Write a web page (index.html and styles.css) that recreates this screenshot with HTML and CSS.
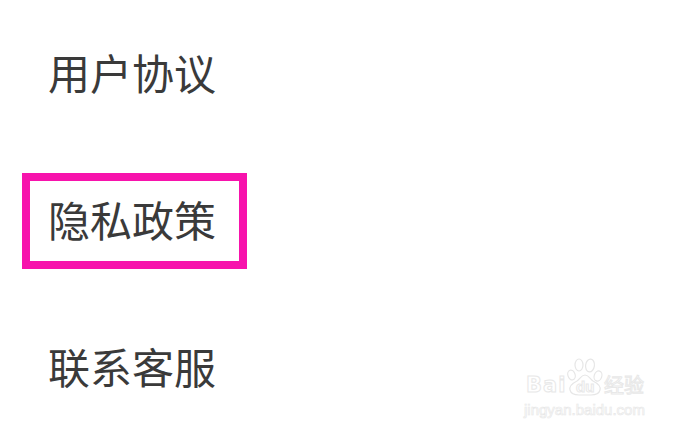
FILE: index.html
```html
<!DOCTYPE html>
<html lang="zh-CN">
<head>
    <meta charset="UTF-8">
    <meta name="viewport" content="width=device-width, initial-scale=1.0">
    <title>设置</title>
    <link rel="stylesheet" href="styles.css">
</head>
<body>
    <ul class="menu">
        <li class="menu-item">用户协议</li>
        <li class="menu-item"><span class="highlight">隐私政策</span></li>
        <li class="menu-item">联系客服</li>
    </ul>

    <div class="watermark">
        <div class="wm-logo">
            <span class="wm-bai">Bai</span>
            <svg class="wm-paw" viewBox="0 0 36 38" width="36" height="38">
                <g fill="#fff" stroke="#e6e6e6" stroke-width="1.2">
                    <ellipse cx="4.5" cy="17" rx="3.6" ry="5" transform="rotate(-18 4.5 17)"/>
                    <ellipse cx="12" cy="7" rx="4" ry="6"/>
                    <ellipse cx="23" cy="7.5" rx="4.4" ry="6.5" transform="rotate(8 23 7.5)"/>
                    <ellipse cx="31" cy="18" rx="3.8" ry="5.2" transform="rotate(18 31 18)"/>
                    <path d="M18 17c-4 0-5 4-8 6-4 2-8 5-7 9 1 4 5 5 9 5h12c4 0 8-1 9-5 1-4-3-7-7-9-3-2-4-6-8-6z"/>
                </g>
            </svg>
            <span class="wm-du">du</span>
            <span class="wm-jingyan">经验</span>
        </div>
        <div class="wm-url">jingyan.baidu.com</div>
    </div>
</body>
</html>
```

FILE: styles.css
```css
* {
    box-sizing: border-box;
    margin: 0;
    padding: 0;
}

body {
    position: relative;
    width: 684px;
    height: 432px;
    overflow: hidden;
    background: #fff;
    font-family: "Liberation Sans", "Noto Sans CJK SC", sans-serif;
}

.menu {
    list-style: none;
    margin-top: -2px;
    padding-left: 48px;
}

.menu-item {
    display: flex;
    align-items: center;
    height: 147px;
    font-size: 42px;
    color: #3a3a3a;
}

.highlight {
    position: relative;
}

.highlight::after {
    content: "";
    position: absolute;
    top: -15px;
    right: -31px;
    bottom: -20px;
    left: -26px;
    border: 8px solid #f713ac;
}

.watermark {
    position: absolute;
    left: 524px;
    top: 358px;
    width: 124px;
}

.wm-logo {
    position: relative;
    height: 40px;
}

.wm-bai,
.wm-du,
.wm-jingyan {
    position: absolute;
    color: #fff;
    -webkit-text-stroke: 1px #e8e8e8;
    font-weight: bold;
}

.wm-bai {
    left: 2px;
    top: 14px;
    font-family: "DejaVu Sans", sans-serif;
    font-size: 21px;
    line-height: 26px;
    letter-spacing: 1px;
}

.wm-paw {
    position: absolute;
    left: 43px;
    top: 0;
}

.wm-du {
    left: 52px;
    top: 20px;
    font-size: 15px;
    line-height: 18px;
}

.wm-jingyan {
    left: 80px;
    top: 17px;
    font-size: 20px;
    line-height: 22px;
    font-weight: normal;
}

.wm-url {
    margin-top: 4px;
    font-size: 15px;
    line-height: 16px;
    color: #fff;
    -webkit-text-stroke: 0.7px #e8e8e8;
    white-space: nowrap;
}
```
